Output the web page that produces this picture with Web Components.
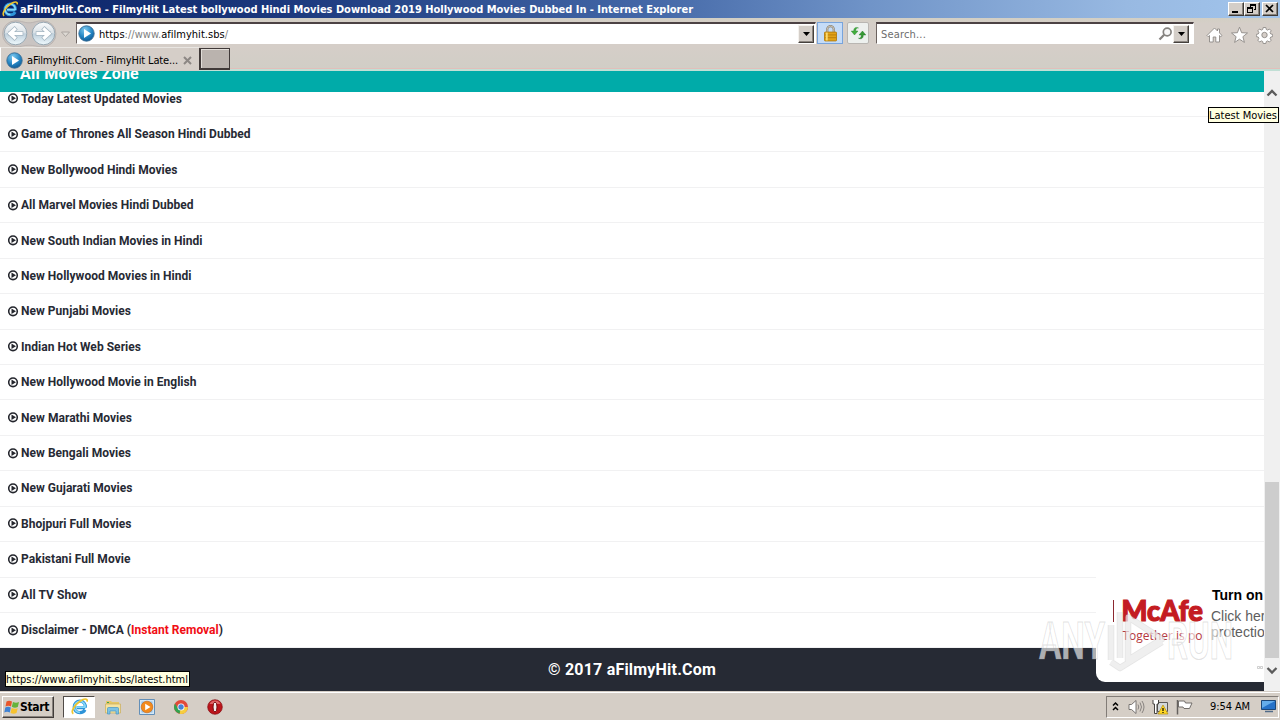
<!DOCTYPE html>
<html lang="en">
<head>
<meta charset="utf-8">
<title>aFilmyHit.Com</title>
<style>
  html, body { margin: 0; height: 100%; overflow: hidden; }
  body { font-family: 'DejaVu Sans Condensed', 'DejaVu Sans', sans-serif; font-size: 11px; color: #000; }
</style>
</head>
<body>
<desktop-screen></desktop-screen>

<script>
const define = (name, html, setup) => {
  const template = document.createElement('template');
  template.innerHTML = html;
  customElements.define(name, class extends HTMLElement {
    constructor() {
      super();
      this.attachShadow({ mode: 'open' }).appendChild(template.content.cloneNode(true));
    }
    connectedCallback() {
      if (setup) setup(this, this.shadowRoot);
    }
  });
};

define('site-icon', `
  <style>:host { display: block; width: 17px; height: 17px; flex: none; } svg { display: block; }</style>
  <svg width="17" height="17" viewBox="0 0 17 17">
    <defs><radialGradient id="g" cx=".4" cy=".25" r=".8"><stop offset="0" stop-color="#7cc8ee"/><stop offset=".6" stop-color="#2384c2"/><stop offset="1" stop-color="#0d5590"/></radialGradient></defs>
    <circle cx="8.5" cy="8.5" r="7.7" fill="url(#g)" stroke="#3a6d94" stroke-width=".9"/>
    <path d="M6 4v9l7-4.500z" fill="#fff"/>
  </svg>`);

define('ie-icon', `
  <style>:host { display: block; flex: none; } svg { display: block; width: var(--size, 16px); height: var(--size, 16px); }</style>
  <svg viewBox="0 0 16 16">
    <path d="M13.4 9H5.2M13.5 9.1C13.8 5.4 11.6 3 8.4 3 5.3 3 3 5.3 3 8.5s2.3 5.3 5.4 5.3c2.2 0 3.9-1 4.7-2.7" fill="none" stroke="#2d93d8" stroke-width="3"/>
    <path d="M13.4 8.6H5M13.3 9C13.5 5.6 11.4 3.2 8.4 3.2 5.5 3.2 3.2 5.5 3.2 8.5s2.3 5 5.2 5" fill="none" stroke="#86d8f8" stroke-width="1.600"/>
    <path d="M2.2 14.8C-.8 13.2 3.3 6.5 8.5 3 12.3.4 15.6 0 15.2 3.4" fill="none" stroke="#f0c52c" stroke-width="1.600"/>
  </svg>`);

define('drop-button', `
  <style>
    :host { display: flex; align-items: center; justify-content: center; box-sizing: border-box; width: 16px; height: 18px; background: #d4cec8;
      border: 1px solid; border-color: #f5f2ee #45403c #45403c #f5f2ee; box-shadow: inset -1px -1px #8b8580; }
  </style>
  <svg width="7" height="4"><path d="M0 0h7L3.5 4z" fill="#000"/></svg>`);

define('title-bar', `
  <style>
    :host { display: flex; align-items: center; height: 18px; padding: 0 2px 0 2px; box-sizing: border-box;
      background: linear-gradient(90deg, #0b2468 0%, #1b387d 22%, #4266a6 50%, #7094c8 68%, #98b9e2 88%, #a2c5ec 100%); color: #fff; }
    fit-text { margin-left: 2px; font-weight: bold; flex: 1; }
    .buttons { display: flex; gap: 0; }
    .button { width: 16px; height: 14px; box-sizing: border-box; background: #d4cec8; border: 1px solid; border-color: #fff #403c38 #403c38 #fff; box-shadow: inset -1px -1px #87827c; }
    .button.close { margin-left: 2px; }
    svg { display: block; }
  </style>
  <ie-icon></ie-icon>
  <fit-text w="673">aFilmyHit.Com - FilmyHit Latest bollywood Hindi Movies Download 2019 Hollywood Movies Dubbed In - Internet Explorer</fit-text>
  <div class="buttons">
    <div class="button"><svg width="14" height="12"><path d="M3 8h6v2H3z"/></svg></div>
    <div class="button"><svg width="14" height="12"><path d="M5 1.5h6M5.5 1v3M10.5 1v6M9 6.5h2M2 4.5h6M2.5 4v6M7.5 4v6M2 9.5h6M5 2.5h6M2 5.5h6" fill="none" stroke="#000"/></svg></div>
    <div class="button close"><svg width="14" height="12"><path d="M3 2l7 7M10 2L3 9" stroke="#000" stroke-width="1.7"/></svg></div>
  </div>`);

define('nav-bar', `
  <style>
    :host { display: flex; height: 29px; padding: 4px 6px 3px 2px; box-sizing: border-box; background: linear-gradient(#d2cfc4, #d5cec8 6px); }
    svg { display: block; }
    .history { width: 74px; flex: none; margin-top: -2px; }
    .field { display: flex; align-items: center; height: 22px; box-sizing: border-box; background: #fff;
      border: 1px solid; border-color: #6b625f #fff #fff #6b625f; border-top: 2px solid #4c4244; }
    .address { width: 740px; padding: 0 1px 0 1px; }
    .address fit-text { margin: 1px 0 0 4px; flex: 1; color: #000; }
    .address fit-text b { font-weight: normal; color: #808080; }
    .lock, .refresh { display: flex; align-items: center; justify-content: center; box-sizing: border-box; height: 22px; }
    .lock { width: 26px; margin-left: 1px; background: #c5dcf8; border: 1px solid #78a4dc; }
    .refresh { width: 22px; margin-left: 4px; background: #edf0ee; border: 1px solid #b9b6b2; border-radius: 2px; }
    .search { width: 318px; margin-left: 7px; padding: 0 3px 0 4px; color: #6d6d6d; }
    .search fit-text { flex: 1; margin-top: 1px; }
    .tools { display: flex; gap: 8px; margin: 4px 0 0 12px; }
  </style>
  <svg class="history" width="74" height="28" viewBox="0 0 74 28">
    <defs><linearGradient id="b" x2="0" y2="1"><stop offset="0" stop-color="#f9fbfc"/><stop offset=".45" stop-color="#dce3e8"/><stop offset=".52" stop-color="#bfd0dc"/><stop offset="1" stop-color="#eef9fd"/></linearGradient></defs>
    <path d="M13.500 .8c7 0 8 2 13.500 2s6.500-2 14-2a13 13 0 0 1 0 26c-7 0-8-1.500-14-1.500s-6.500 1.500-13.500 1.500a13 13 0 0 1 0-26z" fill="#c9c4c2" stroke="#b5afac" stroke-width=".8"/>
    <circle cx="13.500" cy="13.500" r="11.300" fill="url(#b)" stroke="#98a8b3"/>
    <circle cx="41.500" cy="13.500" r="11.300" fill="url(#b)" stroke="#98a8b3"/>
    <g fill="none" stroke-linecap="square">
      <path d="M19 13.500H8.500M12.500 9.300L8 13.500l4.500 4.200M36 13.500h10.500M42.500 9.300l4.500 4.200-4.500 4.200" stroke="#a5b6c2" stroke-width="4.600"/>
      <path d="M19 13.500H8.500M12.500 9.300L8 13.500l4.500 4.200M36 13.500h10.500M42.500 9.300l4.500 4.200-4.500 4.200" stroke="#fff" stroke-width="3.200"/>
    </g>
    <path d="M59.500 12h8l-4 4.500z" fill="#dedad5" stroke="#aaa4a0"/>
  </svg>
  <div class="field address"><site-icon></site-icon><fit-text w="129"><span>https</span><b>://www.</b><span>afilmyhit.sbs</span><b>/</b></fit-text><drop-button></drop-button></div>
  <div class="lock"><svg width="13" height="17" viewBox="0 0 14 18">
    <path d="M3.500 8V4.500a3.500 3.500 0 0 1 7 0V8" fill="none" stroke="#8c8375" stroke-width="2.400"/><path d="M3.500 8V4.500a3.500 3.500 0 0 1 7 0V8" fill="none" stroke="#ddd8c9" stroke-width=".8"/>
    <rect x=".5" y="7.500" width="13" height="9.500" rx=".8" fill="#e2a31a" stroke="#b37d12"/><path d="M1 10.500h12M1 13.500h12" stroke="#b97e0c"/><path d="M3 8v8.500" stroke="#fbda70" stroke-width="2"/>
  </svg></div>
  <div class="refresh"><svg width="15" height="14" viewBox="0 0 15 14">
    <path d="M7.500 2C5.500 1.500 4.700 3 4.700 5H7L3.500 9 .2 5h2.500C2.700 1.800 4.700.6 7.500 2z" fill="#42ad3d" stroke="#218029" stroke-width=".4"/>
    <path d="M7.500 12.200c2 .5 2.800-1 2.800-3.200H8l3.500-4 3.300 4h-2.500c0 3.500-2 4.500-4.800 3.200z" fill="#369934" stroke="#176f20" stroke-width=".4"/>
  </svg></div>
  <div class="field search"><fit-text w="45">Search...</fit-text>
    <svg width="16" height="16" viewBox="0 0 16 16"><circle cx="9.200" cy="6" r="3.900" fill="#f7f7f7" stroke="#85827f" stroke-width="1.700"/><path d="M6.200 8.800L1.500 13.500" stroke="#85827f" stroke-width="2.300"/></svg>
    <drop-button style="margin-left:-1px;margin-right:1px"></drop-button></div>
  <div class="tools">
    <svg width="17" height="18" viewBox="0 0 17 18"><path d="M8.500 2L1 9.500l1.200 1.200L3.500 9.500V16h3.700v-5h2.600v5h3.700V9.500l1.300 1.200L16 9.500l-2.500-2.600V3h-2v2z" fill="#fff" stroke="#8d8986" stroke-width=".9"/></svg>
    <svg width="17" height="18" viewBox="0 0 17 18"><path d="M8.500 1.200l2.100 5.500 5.900.3-4.600 3.700 1.500 5.700-4.900-3.200-4.900 3.200 1.500-5.700L.5 7l5.900-.3z" fill="#fff" stroke="#8d8986" stroke-width=".9"/></svg>
    <svg width="17" height="18" viewBox="0 0 17 18"><g transform="translate(8.500 9)"><path d="M-1.300-7.500h2.600l.5 2 1.300.6 1.800-1.100 1.800 1.800-1.100 1.800.6 1.300 2 .5v2.200l-2 .5-.6 1.300 1.100 1.800-1.800 1.800-1.800-1.100-1.300.6-.5 2h-2.600l-.5-2-1.300-.6-1.800 1.100-1.800-1.800 1.100-1.800-.6-1.300-2-.5v-2.200l2-.5.6-1.300-1.100-1.800 1.800-1.800 1.800 1.100 1.300-.6z" fill="#fff" stroke="#8d8986" stroke-width=".9"/><circle r="2.700" fill="#d5cec8" stroke="#8d8986" stroke-width=".9"/></g></svg>
  </div>`);

define('tab-bar', `
  <style>
    :host { display: flex; height: 24px; background: linear-gradient(#d5cec8, #d1cec6 21px, #e2bfba 21px, #e2bfba 22px, #c1dfd5 22px); }
    .tab { display: flex; align-items: center; width: 199px; height: 24px; padding: 1px 7px 0 5px; box-sizing: border-box; background: #d5cec8; border-top: 1px solid #e9e6e2; border-left: 1px solid #fff; }
    .tab fit-text { margin-left: 4px; flex: 1; }
    .new { width: 31px; height: 22px; margin-top: 1px; box-sizing: border-box; background: #bab3ae; border: 1px solid #403938; border-left-width: 2px; border-bottom-width: 2px; box-shadow: inset 1px 1px #e1ddd8; }
  </style>
  <div class="tab"><site-icon></site-icon><fit-text w="151">aFilmyHit.Com - FilmyHit Late...</fit-text>
    <svg width="9" height="9"><path d="M1 1l7 7M8 1L1 8" stroke="#8c8784" stroke-width="2"/></svg></div>
  <div class="new"></div>`);

define('movie-row', `
  <style>
    :host { display: flex; align-items: center; flex: 1; box-sizing: border-box; padding: 0 8px; border-bottom: 1px solid #f1f1f2;
      font: bold 12px Roboto, sans-serif; color: #272a34; }
    svg { flex: none; margin-right: 2px; }
  </style>
  <svg width="11" height="11" viewBox="0 0 11 11"><circle cx="5" cy="5.300" r="4.300" fill="none" stroke="#24262d" stroke-width="1.600"/><path d="M3.500 2.500v5.600L8 5.300z" fill="#24262d"/></svg>
  <slot></slot>`);

define('scroll-bar', `
  <style>
    :host { display: flex; flex-direction: column; align-items: center; width: 16px; background: #f0f0f0; }
    .up { margin-top: 17px; height: 10px; }
    .track { flex: 1; display: flex; flex-direction: column; justify-content: flex-end; width: 100%; }
    .thumb { height: 176px; margin: 0 1px; background: #cdcdcd; }
    .down { margin: 8px 0 16px; height: 9px; }
  </style>
  <svg class="up" width="12" height="10"><path d="M1.500 7.500L6 3l4.500 4.500" fill="none" stroke="#5b5b5b" stroke-width="2.300"/></svg>
  <div class="track"><div class="thumb"></div></div>
  <svg class="down" width="12" height="9"><path d="M1.500 2L6 6.500 10.500 2" fill="none" stroke="#5b5b5b" stroke-width="2.300"/></svg>`);

define('mcafee-popup', `
  <style>
    :host { display: flex; width: 168px; height: 106px; overflow: hidden; background: #fff; border-radius: 0 0 0 9px; box-sizing: border-box; padding: 11px 0 0 17px; }
    .brand { width: 91px; flex: none; overflow: hidden; height: 62px; margin-top: 4px; }
    .message { display: flex; flex-direction: column; align-items: flex-start; margin-left: 7px; font: 14px/16px 'Liberation Sans', Arial, sans-serif; color: #5d5d5d; white-space: nowrap; }
    .message strong { color: #000; margin: 0 0 5px 1px; }
    .dots { align-self: flex-end; margin-top: 26px; margin-right: 2px; }
    svg { display: block; }
  </style>
  <svg class="brand" width="91" height="62" viewBox="0 0 91 62">
    <path d="M.5 9v22" stroke="#8c2830"/>
    <text x="8.500" y="30" textLength="81.500" lengthAdjust="spacingAndGlyphs" font-family="Lato" font-weight="900" font-size="28" fill="#c41c22" stroke="#c41c22" stroke-width="1.200">McAfe</text>
    <text x="9.500" y="49" font-family="Open Sans" font-size="12" textLength="80" fill="#b53840">Together is po</text>
  </svg>
  <div class="message"><strong><fit-text w="51">Turn on</fit-text></strong><span>Click her</span><span>protectio</span>
    <svg class="dots" width="6" height="4"><path d="M.5.5h2v2h-2zM3.500.5h2v2h-2z" fill="none" stroke="#bbb" stroke-width=".7"/></svg></div>`);

define('web-page', `
  <style>
    :host { position: relative; display: flex; height: 620px; overflow: hidden; background: #fff; }
    .page { flex: 1; display: flex; flex-direction: column; min-width: 0; }
    header { position: relative; z-index: 1; flex: none; height: 21px; overflow: hidden; background: #00aba9; color: #fff; padding-left: 20px; font: bold 16px/20px Roboto, sans-serif; }
    header div { margin-top: -7px; }
    .list { flex: none; display: flex; flex-direction: column; height: 566.8px; margin: -10.4px 0 -.4px; }
    .list em { font-style: normal; color: #f10d14; }
    footer { flex: 1; display: flex; align-items: center; justify-content: center; background: #262a34; color: #fff; font: bold 16px Roboto, sans-serif; }
    mcafee-popup { position: absolute; left: 1096px; top: 505px; }
    .tip { position: absolute; box-sizing: border-box; height: 16px; border: 1px solid #000; background: #ffffe1; line-height: 15px; }
    .title { left: 1208px; top: 36px; width: 71px; }
    .status { left: 5px; top: 600px; width: 185px; }
    .mark { position: absolute; left: 1030px; top: 529px; }
  </style>
  <div class="page">
    <header><div><fit-text w="119">All Movies Zone</fit-text></div></header>
    <div class="list"></div>
    <footer><fit-text w="168">© 2017 aFilmyHit.Com</fit-text></footer>
  </div>
  <scroll-bar></scroll-bar>
  <mcafee-popup></mcafee-popup>
  <svg class="mark" width="210" height="80" viewBox="0 0 210 80">
    <g fill="#fff" fill-opacity=".65" stroke="#999" stroke-opacity=".3" stroke-width="1" font-family="Roboto" font-weight="bold" font-size="51">
      <text x="9" y="59" textLength="66" lengthAdjust="spacingAndGlyphs">ANY</text>
      <text x="137" y="59" textLength="66" lengthAdjust="spacingAndGlyphs">RUN</text>
    </g>
    <g fill="none" stroke-linejoin="round">
      <path d="M81 25v35M90 12v46M98 45V17l34 22-34 21V45M81 62l9 6 42-26" stroke="#8c8c8c" stroke-opacity=".22" stroke-width="6.500"/>
      <path d="M81 25v35M90 12v46M98 45V17l34 22-34 21V45M81 62l9 6 42-26" stroke="#f4f4f4" stroke-opacity=".65" stroke-width="4.800"/>
    </g>
  </svg>
  <div class="tip title"><fit-text w="68">Latest Movies</fit-text></div>
  <div class="tip status"><fit-text w="182">https://www.afilmyhit.sbs/latest.html</fit-text></div>`,
  (host, root) => {
    // label, drawn width
    const rows = [
      ['Today Latest Updated Movies', 161],
      ['Game of Thrones All Season Hindi Dubbed', 229.5],
      ['New Bollywood Hindi Movies', 156.5],
      ['All Marvel Movies Hindi Dubbed', 172.5],
      ['New South Indian Movies in Hindi', 181.5],
      ['New Hollywood Movies in Hindi', 170.5],
      ['New Punjabi Movies', 110],
      ['Indian Hot Web Series', 120],
      ['New Hollywood Movie in English', 175.5],
      ['New Marathi Movies', 111],
      ['New Bengali Movies', 110],
      ['New Gujarati Movies', 111.5],
      ['Bhojpuri Full Movies', 110.5],
      ['Pakistani Full Movie', 109.5],
      ['All TV Show', 66],
      ['Disclaimer - DMCA (<em>Instant Removal</em>)', 202],
    ];
    root.querySelector('.list').innerHTML = rows
      .map(([label, w]) => `<movie-row><fit-text w="${w}">${label}</fit-text></movie-row>`).join('');
  });

define('task-bar', `
  <style>
    :host { display: flex; align-items: center; height: 29px; box-sizing: border-box; padding: 3px 1px 2px 2px; background: #d5cec6; border-top: 1px solid #d5cec6; box-shadow: inset 0 1px #fff; }
    .start { display: flex; align-items: center; width: 52px; height: 22px; box-sizing: border-box; padding-left: 1px; font-weight: bold; font-size: 12px;
      border: 1px solid; border-color: #fff #413c39 #413c39 #fff; box-shadow: inset -1px -1px #88827d; }
    .ie { display: flex; align-items: center; justify-content: center; margin-left: 9px; width: 32px; height: 22px; box-sizing: border-box; background: #fff; border: 1px solid; border-color: #504b48 #fff #fff #504b48; --size: 17px; }
    .apps { display: flex; align-items: center; gap: 18px; margin-left: 10px; flex: 1; }
    .tray { display: flex; align-items: center; width: 173px; height: 22px; box-sizing: border-box; padding: 0 2px 0 5px; border: 1px solid; border-color: #827c77 #fff #fff #827c77; }
    .tray fit-text { margin: 0 11px 0 17px; }
    svg { display: block; flex: none; }
  </style>
  <div class="start">
    <svg width="16" height="16" viewBox="0 0 16 16"><path d="M2.500 2.500Q5 .8 8 2.500L7 7.500Q4.500 6 1.500 7.500z" fill="#e8562c"/><path d="M9 3q3 1.500 6 0l-1.200 5q-3 1.500-6-.2z" fill="#65b33c"/><path d="M1.300 8.500q2.700-1.500 5.500 0l-1 5Q3 12 .3 13.500z" fill="#3f82d4"/><path d="M7.700 9q3 1.500 6 .2l-1.200 4.900q-3 1.300-6-.2z" fill="#f6c22f"/></svg>
    <fit-text w="29">Start</fit-text>
  </div>
  <div class="ie"><ie-icon></ie-icon></div>
  <div class="apps">
    <svg width="16" height="16" viewBox="0 0 16 16"><path d="M1 2h5l1 1h7v3H1z" fill="#e6c666"/><path d="M.5 5h15v9H.5z" fill="#f6e3a0" stroke="#c9ad5c" stroke-width=".7"/><path d="M2.500 15V9.500q0-1 1-1h9q1 0 1 1V15H11v-3H5v3z" fill="#7dc2e4" stroke="#4596c4" stroke-width=".7"/><path d="M2 3h2v1H2z" fill="#40a34d"/></svg>
    <svg width="16" height="16" viewBox="0 0 16 16"><path d="M.5.5h15v15H.5z" fill="#d2e7f7" stroke="#638fb8"/><path d="M2.500 2.500h11v11h-11z" fill="#94bddf"/><circle cx="8" cy="8" r="5.800" fill="#f28a1c" stroke="#cf640d" stroke-width=".6"/><path d="M6.200 4.800v6.400L11.500 8z" fill="#fff"/></svg>
    <svg width="16" height="16" viewBox="0 0 16 16"><circle cx="8" cy="8" r="7" fill="#e14a39"/><path d="M8 8h7a7 7 0 0 1-8.500 6.800z" fill="#f6ce3e"/><path d="M8 8l-1.500 6.800A7 7 0 0 1 2 4.500L5 9.500z" fill="#32a350"/><circle cx="8" cy="8" r="3.500" fill="#fff"/><circle cx="8" cy="8" r="2.700" fill="#4583d7"/></svg>
    <svg width="16" height="16" viewBox="0 0 16 16"><circle cx="8" cy="8" r="7.300" fill="#bc151b" stroke="#850d12" stroke-width=".7"/><path d="M2.500 5Q4 1.500 8 1.500t5.500 3.500z" fill="#df6466"/><ellipse cx="8" cy="8" rx="2" ry="5" fill="#f4eeee" stroke="#750b0e"/></svg>
  </div>
  <div class="tray">
    <svg width="7" height="11"><path d="M1 4.500L3.500 2 6 4.500M1 9l2.500-2.500L6 9" fill="none" stroke="#000" stroke-width="1.500"/></svg>
    <svg width="17" height="16" viewBox="0 0 17 16" style="margin-left:9px"><path d="M1 5.500h2.500L8 1.500v13L3.500 10.500H1z" fill="#fff" stroke="#6d6966" stroke-width=".9"/><path d="M10 5.500q1.500 2.500 0 5M12 3.500q3 4.500 0 9M14 2q4 6 0 12" fill="none" stroke="#7f7b78" stroke-width=".9"/></svg>
    <svg width="17" height="16" viewBox="0 0 17 16" style="margin-left:7px"><path d="M5.500 3.500h10v9h-10z" fill="#d3d8da" stroke="#5b5957"/><path d="M1 1v4h1.500v9.500H5V5h1.500V1" fill="#fff" stroke="#464442"/><path d="M11 6l5 9H6z" fill="#ffd824" stroke="#b28d0f" stroke-width=".7"/><path d="M11 9v3M11 13v1" stroke="#000" stroke-width="1.200"/></svg>
    <svg width="17" height="16" viewBox="0 0 17 16" style="margin-left:7px"><path d="M1.500 1v14.500" stroke="#65615e" stroke-width="1.500"/><path d="M2.500 2h6l1 2H16l-2.500 5.500H8L7 8H2.500z" fill="#fff" stroke="#65615e" stroke-width=".9"/></svg>
    <fit-text w="40">9:54 AM</fit-text>
    <svg width="15" height="13" viewBox="0 0 15 13"><path d="M.5.500h14v9H.5z" fill="#2772c8" stroke="#1d4778"/><path d="M1 1h13L1 8z" fill="#66adea"/><path d="M4 11.500h8" stroke="#506b88" stroke-width="1.500"/></svg>
  </div>`);

define('desktop-screen', `
  <style>:host { display: flex; flex-direction: column; width: 1280px; height: 720px; overflow: hidden; }</style>
  <title-bar></title-bar>
  <nav-bar></nav-bar>
  <tab-bar></tab-bar>
  <web-page></web-page>
  <task-bar></task-bar>`);

/**
 * One line of text spaced out to a given width
 *
 * @element fit-text
 * @attr {number} w - The width of the line in pixels
 */
define('fit-text', `
  <style>:host { display: block; white-space: nowrap; } span { display: inline-block; }</style>
  <span><slot></slot></span>`,
  (host, root) => {
    const span = root.querySelector('span');
    const extra = Number(host.getAttribute('w')) - span.getBoundingClientRect().width;
    span.style.letterSpacing = `${extra / host.textContent.length}px`;
  });
</script>
</body>
</html>
